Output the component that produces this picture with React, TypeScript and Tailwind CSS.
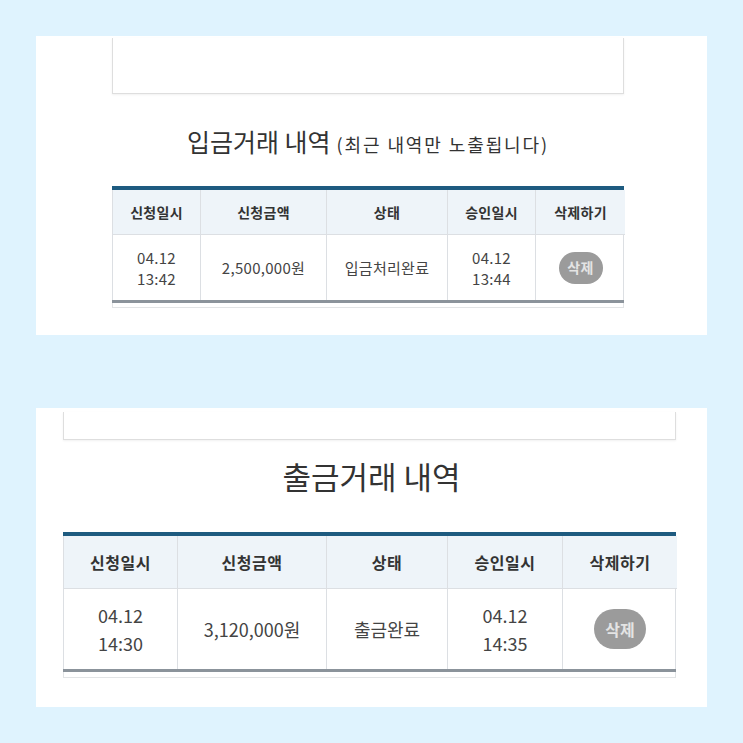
const font = { fontFamily: '"Noto Sans CJK KR", "Noto Sans", sans-serif' };

interface Row {
  reqDate: string;
  reqTime: string;
  amount: string;
  status: string;
  okDate: string;
  okTime: string;
}

function DeleteBtn({ big }: { big?: boolean }) {
  return (
    <span
      className={
        big
          ? "flex h-[40px] w-[52px] items-center justify-center rounded-full bg-[#9b9b9b] text-[16px] font-bold text-[#e4e4e4]"
          : "flex h-[32px] w-[44px] items-center justify-center rounded-full bg-[#9b9b9b] text-[14px] font-bold text-[#e4e4e4]"
      }
    >
      삭제
    </span>
  );
}

function HistoryTable({ row, big }: { row: Row; big?: boolean }) {
  const cols = big ? "grid-cols-[114px_149px_121px_115px_114px]" : "grid-cols-[88px_126px_121px_88px_89px]";
  const head = big ? "h-[53px] text-[16px] tracking-[0.5px]" : "h-[45px] text-[14px] tracking-[0.3px]";
  const body = big ? "h-[80px] text-[18px] leading-[28px]" : "h-[65px] text-[15px] leading-[21px] tracking-[0.3px]";
  const headers = ["신청일시", "신청금액", "상태", "승인일시", "삭제하기"];
  return (
    <div className={big ? "w-[613px]" : "w-[512px]"}>
      <div className="h-[4px] bg-[#1e5b80]" />
      <div className={`grid ${cols} border-x border-[#dcdfe3]`}>
        {headers.map((h, i) => (
          <div
            key={h}
            className={`flex ${head} items-center justify-center border-b border-[#dcdfe3] bg-[#eef4f9] font-bold text-[#333] ${i < 4 ? "border-r" : ""}`}
          >
            {h}
          </div>
        ))}
        <div className={`flex ${body} flex-col items-center justify-center border-r border-[#dcdfe3] text-[#444]`}>
          <span>{row.reqDate}</span>
          <span>{row.reqTime}</span>
        </div>
        <div className={`flex ${body} items-center justify-center border-r border-[#dcdfe3] text-[#444]`}>{row.amount}</div>
        <div className={`flex ${body} items-center justify-center border-r border-[#dcdfe3] text-[#444]`}>{row.status}</div>
        <div className={`flex ${body} flex-col items-center justify-center border-r border-[#dcdfe3] text-[#444]`}>
          <span>{row.okDate}</span>
          <span>{row.okTime}</span>
        </div>
        <div className={`flex ${body} items-center justify-center`}>
          <DeleteBtn big={big} />
        </div>
      </div>
      <div className="h-[3px] bg-[#8b939b]" />
      <div className={`${big ? "h-[6px]" : "h-[5px]"} border-x border-b border-[#e2e4e6]`} />
    </div>
  );
}

export default function App() {
  return (
    <div className="min-h-[743px] bg-[#dff3fe] px-[36px] py-[36px]" style={font}>
      {/* 입금 */}
      <div className="flex h-[299px] flex-col bg-white pt-[2px]">
        <div className="ml-[76px] h-[56px] w-[512px] border-x border-b border-[#dedede] shadow-[0_1px_2px_rgba(0,0,0,0.06)]" />
        <div className="mt-[30px] flex items-baseline justify-center pr-[7px] text-[#333]">
          <span className="text-[25px] leading-[34px]">입금거래 내역</span>
          <span className="ml-[6px] text-[18px] tracking-[1.9px]">(최근 내역만 노출됩니다)</span>
        </div>
        <div className="ml-[76px] mt-[28px]">
          <HistoryTable
            row={{ reqDate: "04.12", reqTime: "13:42", amount: "2,500,000원", status: "입금처리완료", okDate: "04.12", okTime: "13:44" }}
          />
        </div>
      </div>

      {/* 출금 */}
      <div className="mt-[73px] flex h-[299px] flex-col bg-white pt-[4px]">
        <div className="ml-[27px] h-[28px] w-[613px] border-x border-b border-[#dedede] shadow-[0_1px_2px_rgba(0,0,0,0.06)]" />
        <div className="mt-[16px] text-center text-[31px] leading-[40px] text-[#333]">출금거래 내역</div>
        <div className="ml-[27px] mt-[36px]">
          <HistoryTable
            big
            row={{ reqDate: "04.12", reqTime: "14:30", amount: "3,120,000원", status: "출금완료", okDate: "04.12", okTime: "14:35" }}
          />
        </div>
      </div>
    </div>
  );
}
